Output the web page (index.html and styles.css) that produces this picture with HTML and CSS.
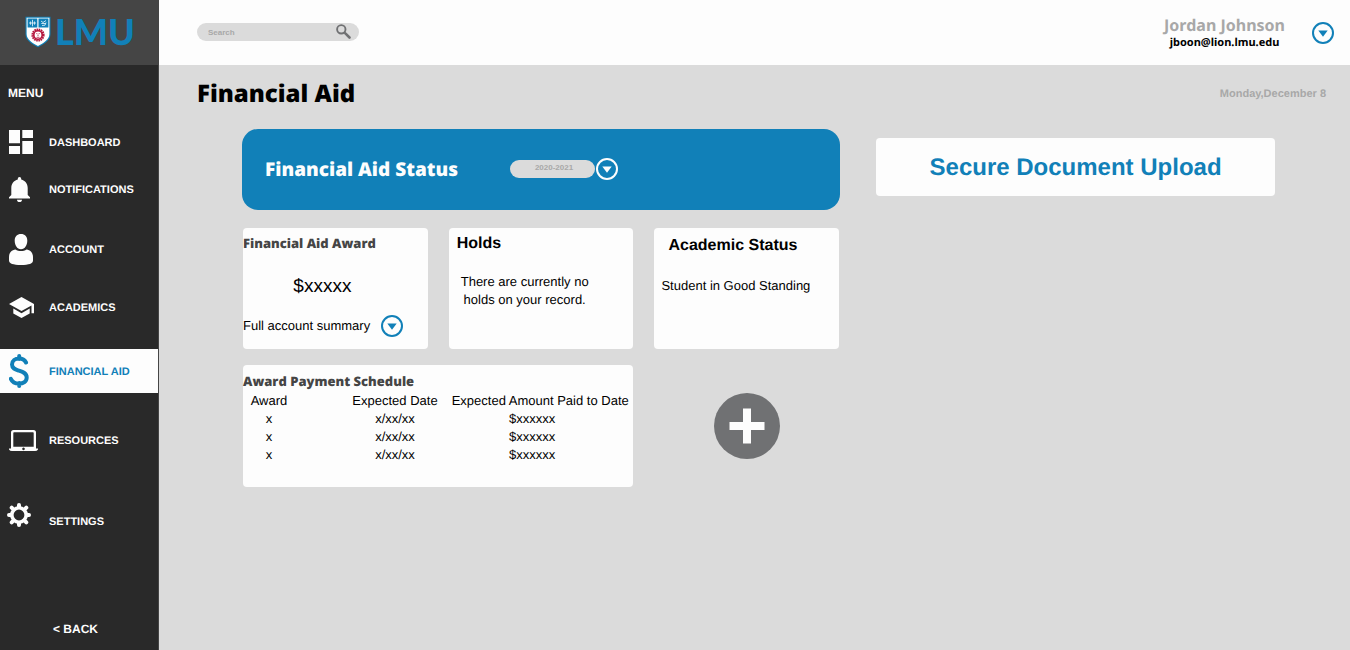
FILE: index.html
```html
<!DOCTYPE html>
<html lang="en">
<head>
<meta charset="utf-8">
<meta name="viewport" content="width=device-width, initial-scale=1">
<title>Financial Aid</title>
<link rel="stylesheet" href="styles.css">
</head>
<body class="app">
<aside class="sidebar">
  <a class="logo" href="#" aria-label="LMU home">
    <svg class="logo-shield" viewBox="0 0 26 32" aria-hidden="true">
      <path d="M0.5 0.8H25.5V18C25.5 25 18 28.500 13 31.200C8 28.500 0.500 25 0.500 18Z" fill="#1180b8"/>
      <path d="M1.600 1.800H24.400V18C24.400 24 17.500 27.500 13 30C8.500 27.500 1.600 24 1.600 18Z" fill="#fff"/>
      <path d="M2.600 2.600H12.300V11.500H2.600ZM13.500 2.600H23.400V11.500H13.500Z" fill="#1180b8"/>
      <path d="M4 7H11M7.500 3.800V10.300M5.500 5.500V8.700M9.500 5.500V8.700M16 5L18 6.500L21 4.500M16.300 7.500H21M17 9.500L20 9.200L21 6.500" fill="none" stroke="#d8ecf6" stroke-width="0.900"/>
      <circle cx="13" cy="19" r="5.300" fill="none" stroke="#b5173e" stroke-width="2.600" stroke-dasharray="1.500 0.580"/>
      <circle cx="13" cy="19" r="4.200" fill="none" stroke="#b5173e" stroke-width="1.600"/>
      <path d="M11.300 17.600H12.300M13.700 17.600H14.700M13 18.500V20M11.500 21.300H14.500" stroke="#b5173e" stroke-width="0.800"/>
    </svg>
    <span class="logo-word">LMU</span>
  </a>
  <h2 class="menu-title">MENU</h2>
  <nav class="nav">
    <a class="nav-item" href="#">
      <svg class="nav-icon" viewBox="0 0 24 24"><path d="M0 0H11V13.300H0ZM13.300 0H24V8H13.300ZM0 16H11V24H0ZM13.300 11H24V24H13.300Z"/></svg>
      <span class="nav-text">DASHBOARD</span>
    </a>
    <a class="nav-item" href="#">
      <svg class="nav-icon nav-icon-bell" viewBox="0 0 21 25"><path d="M10.500 0C11.600 0 12.200 0.800 12.200 1.900V2.600C16.200 3.600 18.700 7 18.700 11V18L21 20.300V21.500H0V20.300L2.300 18V11C2.300 7 4.800 3.600 8.800 2.600V1.900C8.800 0.800 9.400 0 10.500 0ZM8 22.700H13C13 24.200 12 25 10.500 25S8 24.200 8 22.700Z"/></svg>
      <span class="nav-text">NOTIFICATIONS</span>
    </a>
    <a class="nav-item gap-medium" href="#">
      <svg class="nav-icon nav-icon-tall" viewBox="0 0 24 31"><path d="M12 0C15.800 0 18.300 2.500 18.300 6.500C18.300 11 16 15.200 12 15.200S5.700 11 5.700 6.500C5.700 2.500 8.200 0 12 0ZM6.500 15.500C9.500 17.500 14.500 17.500 17.500 15.500C21.500 16 24 19 24 23V26.500C24 29.500 20 31 12 31S0 29.500 0 26.500V23C0 19 2.500 16 6.500 15.500Z"/></svg>
      <span class="nav-text">ACCOUNT</span>
    </a>
    <a class="nav-item gap-small" href="#">
      <svg class="nav-icon nav-icon-cap" viewBox="0 0 25 21"><path d="M12.500 0L25 7V16.300H22.500V8.400L12.500 14L0 7ZM4.300 11.500L12.500 16.200L20.700 11.500V16.500L12.500 21L4.300 16.500Z"/></svg>
      <span class="nav-text">ACADEMICS</span>
    </a>
    <a class="nav-item nav-item-active gap-large" href="#" aria-current="page">
      <svg class="nav-icon nav-icon-dollar" viewBox="0 0 20 34"><path d="M17 8.500C15.500 5.500 12.800 4.500 10 4.500C6.300 4.500 3 6.700 3 10.500C3 14.500 6.500 15.500 10 16.700C14 18 17.700 19.200 17.700 23.500C17.700 27.500 14.200 29.600 10 29.600C6.500 29.600 3.200 28 1.800 24.800M10.200 2V5M10.200 29V32" fill="none" stroke="#1180b8" stroke-width="4" stroke-linecap="round"/></svg>
      <span class="nav-text">FINANCIAL AID</span>
    </a>
    <a class="nav-item gap-xlarge" href="#">
      <svg class="nav-icon nav-icon-laptop" viewBox="0 0 29 21"><path fill-rule="evenodd" d="M4.500 0H24.500Q27 0 27 2.500V18.500H29V19.500Q28 21 26 21H3Q1 21 0 19.500V18.500H2V2.500Q2 0 4.500 0ZM5 2.300Q4.300 2.300 4.300 3V16.700H24.700V3Q24.700 2.300 24 2.300ZM14.500 17.600A1.300 1.300 0 1 0 14.510 17.600Z"/></svg>
      <span class="nav-text">RESOURCES</span>
    </a>
    <a class="nav-item nav-item-settings gap-huge" href="#">
      <svg class="nav-icon" viewBox="0 0 24 24"><circle cx="12" cy="12" r="7.200" fill="none" stroke="#fdfdfd" stroke-width="3.600"/><path d="M12 4V2M12 20V22M4 12H2M20 12H22M5.600 5.600L4.700 4.700M18.400 18.400L19.300 19.300M5.600 18.400L4.700 19.300M18.400 5.600L19.300 4.700" stroke="#fdfdfd" stroke-width="4" stroke-linecap="round"/></svg>
      <span class="nav-text">SETTINGS</span>
    </a>
  </nav>
  <a class="back" href="#">&lt; BACK</a>
</aside>

<div class="page">
  <header class="topbar">
    <form class="search" role="search">
      <input class="search-input" type="search" placeholder="Search" aria-label="Search">
      <button class="search-button" type="button" aria-label="Submit search">
        <svg class="search-icon" viewBox="0 0 15 15"><circle cx="5.300" cy="5.300" r="4.200" fill="none" stroke="#707173" stroke-width="1.900"/><path d="M8.300 8.300L9.500 9.500" stroke="#707173" stroke-width="1.800"/><path d="M9.600 9.600L13.500 13.500" stroke="#707173" stroke-width="2.600" stroke-linecap="round"/></svg>
      </button>
    </form>
    <div class="user">
      <div class="user-text">
        <span class="user-name">Jordan Johnson</span>
        <span class="user-mail">jboon@lion.lmu.edu</span>
      </div>
      <button class="round-button" type="button" aria-label="Open account menu">
        <svg viewBox="0 0 22 22"><circle cx="11" cy="11" r="10"/><path d="M6.300 8.500H15.700L11 14.800Z"/></svg>
      </button>
    </div>
  </header>

  <main class="main">
    <div class="title-row">
      <h1 class="page-title">Financial Aid</h1>
      <time class="date">Monday,December 8</time>
    </div>
    <div class="content">
      <div class="primary">
        <section class="banner">
          <h2 class="banner-title">Financial Aid Status</h2>
          <div class="year">
            <select class="year-select" aria-label="Academic year">
              <option>2020-2021</option>
            </select>
            <button class="round-button round-button-light" type="button" aria-label="Choose year">
              <svg viewBox="0 0 22 22"><circle cx="11" cy="11" r="10"/><path d="M6.300 8.500H15.700L11 14.800Z"/></svg>
            </button>
          </div>
        </section>
        <div class="cards">
          <section class="card">
            <h3 class="card-label">Financial Aid Award</h3>
            <p class="amount">$xxxxx</p>
            <div class="summary">
              <span>Full account summary</span>
              <button class="round-button" type="button" aria-label="Show full account summary">
                <svg viewBox="0 0 22 22"><circle cx="11" cy="11" r="10"/><path d="M6.300 8.500H15.700L11 14.800Z"/></svg>
              </button>
            </div>
          </section>
          <section class="card card-holds">
            <h3 class="card-title">Holds</h3>
            <p class="holds-text">There are currently no<br>holds on your record.</p>
          </section>
          <section class="card card-status">
            <h3 class="card-title">Academic Status</h3>
            <p class="status-text">Student in Good Standing</p>
          </section>
          <section class="card card-wide">
            <h3 class="card-label">Award Payment Schedule</h3>
            <table class="schedule">
              <thead>
                <tr><th class="col-award" scope="col">Award</th><th class="col-date" scope="col">Expected Date</th><th scope="col">Expected Amount Paid to Date</th></tr>
              </thead>
              <tbody>
                <tr><td class="col-award">x</td><td class="col-date">x/xx/xx</td><td class="col-amount">$xxxxxx</td></tr>
                <tr><td class="col-award">x</td><td class="col-date">x/xx/xx</td><td class="col-amount">$xxxxxx</td></tr>
                <tr><td class="col-award">x</td><td class="col-date">x/xx/xx</td><td class="col-amount">$xxxxxx</td></tr>
              </tbody>
            </table>
          </section>
          <button class="add-button" type="button" aria-label="Add card">
            <svg viewBox="0 0 66 66"><circle cx="33" cy="33" r="33" fill="#707173"/><path d="M29 15.500H37V29H50.500V37H37V50.500H29V37H15.500V29H29Z" fill="#fdfdfd"/></svg>
          </button>
        </div>
      </div>
      <a class="upload" href="#">Secure Document Upload</a>
    </div>
  </main>
</div>
</body>
</html>
```
FILE: styles.css
```css
* {
  box-sizing: border-box;
}

h1, h2, h3, p {
  margin: 0;
}

a {
  color: inherit;
  text-decoration: none;
}

button {
  padding: 0;
  border: 0;
  background: none;
  cursor: pointer;
}

svg {
  display: block;
}

.app {
  display: flex;
  min-height: 100vh;
  margin: 0;
  background: #dbdbdb;
  color: #000;
  font-family: "Liberation Sans", Arial, sans-serif;
  font-size: 13px;
  line-height: 18px;
  text-rendering: geometricPrecision;
}

/* Sidebar */
.sidebar {
  display: flex;
  flex: 0 0 159px;
  flex-direction: column;
  border-right: 1px solid #454545;
  background: #292929;
  color: #fdfdfd;
}

.logo {
  display: flex;
  align-items: center;
  height: 65px;
  padding: 0 0 2px 25px;
  gap: 4px;
  background: #454545;
}

.logo-shield {
  width: 26px;
  height: 32px;
}

.logo-word {
  padding-bottom: 2px;
  color: #1180b8;
  font: 900 36px/36px Lato, sans-serif;
}

.menu-title {
  padding: 19px 8px 0;
  font-size: 12px;
  line-height: 18px;
}

.nav {
  display: flex;
  flex-direction: column;
  padding-top: 18px;
}

.nav-item {
  display: grid;
  grid-template-columns: 40px 1fr;
  align-items: center;
  height: 44px;
  margin-top: 3px;
  padding-left: 9px;
  font-size: 11px;
  font-weight: 700;
}

.nav-item:first-child {
  margin-top: 0;
}

.nav-item-active {
  background: #fdfdfd;
  color: #1180b8;
}

.nav-text {
  padding-top: 2px;
}

.nav-item.gap-small {
  margin-top: 14px;
}

.nav-item.gap-medium {
  margin-top: 16px;
}

.nav-item.gap-large {
  margin-top: 20px;
}

.nav-item.gap-xlarge {
  margin-top: 25px;
}

.nav-item.gap-huge {
  margin-top: 37px;
}

.nav-icon {
  width: 24px;
  height: 24px;
  fill: #fdfdfd;
}

.nav-icon-bell {
  width: 21px;
  height: 25px;
}

.nav-icon-tall {
  height: 31px;
}

.nav-icon-cap {
  width: 25px;
  height: 21px;
}

.nav-icon-dollar {
  width: 20px;
  height: 34px;
}

.nav-icon-laptop {
  width: 29px;
  height: 21px;
}

.nav-item-settings {
  grid-template-columns: 42px 1fr;
  padding-left: 7px;
}

.nav-item-settings .nav-icon {
  align-self: start;
  margin-top: 4px;
}

.back {
  margin-top: auto;
  padding: 0 53px 12px;
  font-size: 12px;
  font-weight: 700;
  white-space: nowrap;
}

/* Top bar */
.page {
  flex: 1;
  min-width: 0;
}

.topbar {
  display: flex;
  align-items: center;
  justify-content: space-between;
  height: 65px;
  padding: 0 16px 0 38px;
  background: #fdfdfd;
}

.search {
  display: flex;
  align-items: center;
  width: 162px;
  height: 18px;
  margin-bottom: 2px;
  padding: 0 8px 0 11px;
  border-radius: 9px;
  background: #dbdbdb;
}

.search-input {
  flex: 1;
  min-width: 0;
  padding: 2px 0 0;
  border: 0;
  background: none;
  font: 700 8px/16px "Liberation Sans", Arial, sans-serif;
}

.search-input::placeholder {
  color: #a8a8a8;
}

.search-icon {
  width: 15px;
  height: 15px;
}

.user {
  display: flex;
  align-items: center;
  gap: 27px;
}

.user-text {
  display: flex;
  flex-direction: column;
  align-items: center;
  padding-top: 3px;
  font-family: "Noto Sans", sans-serif;
  font-weight: 700;
}

.user-name {
  color: #a8a8a8;
  font-size: 16px;
}

.user-mail {
  font-size: 11px;
}

.round-button {
  width: 22px;
  height: 22px;
  color: #1180b8;
}

.round-button circle {
  fill: none;
  stroke: currentColor;
  stroke-width: 2;
}

.round-button path {
  fill: currentColor;
}

.round-button-light {
  color: #fdfdfd;
}

/* Page body */
.title-row {
  display: flex;
  align-items: center;
  justify-content: space-between;
  padding: 11px 24px 0 38px;
}

.page-title {
  font: 800 24px/36px "Open Sans", sans-serif;
}

.date {
  color: #a8a8a8;
  font-size: 11px;
  font-weight: 700;
}

.content {
  display: grid;
  grid-template-columns: 3fr 2fr;
  align-items: start;
  gap: 36px;
  padding: 17px 75px 24px 83px;
}

.banner {
  display: flex;
  align-items: center;
  min-height: 81px;
  padding: 0 23px 2px;
  border-radius: 16px;
  background: #1180b8;
  gap: 52px;
}

.banner-title {
  color: #fdfdfd;
  font: 800 19px/28px "Open Sans", sans-serif;
}

.year {
  display: flex;
  align-items: center;
  gap: 1px;
}

.year-select {
  width: 85px;
  height: 18px;
  padding: 0 0 1px 3px;
  border: 0;
  border-radius: 9px;
  background: #dbdbdb;
  color: #a8a8a8;
  font: 700 8px/16px "Liberation Sans", Arial, sans-serif;
  text-align: center;
  text-align-last: center;
  appearance: none;
}

.cards {
  display: grid;
  grid-template-columns: repeat(3, 1fr);
  gap: 16px 21px;
  padding: 18px 1px 0;
}

.card {
  min-height: 121px;
  padding-top: 6px;
  border-radius: 4px;
  background: #fdfdfd;
}

.card-label {
  color: #454545;
  font: 800 13px/18px "Open Sans", sans-serif;
}

.card-title {
  font-size: 16px;
  line-height: 18px;
}

.amount {
  margin-top: 23px;
  padding-right: 26px;
  font-size: 19px;
  line-height: 24px;
  text-align: center;
}

.summary {
  display: flex;
  align-items: center;
  margin-top: 16px;
  gap: 11px;
}

.card-holds {
  padding-top: 7px;
  padding-left: 8px;
}

.holds-text {
  width: fit-content;
  margin-top: 20px;
  padding-left: 4px;
  text-align: center;
}

.card-status {
  padding-top: 9px;
  padding-left: 7px;
}

.card-status .card-title {
  padding-left: 7px;
}

.status-text {
  margin-top: 22px;
}

.card-wide {
  grid-column: span 2;
  min-height: 122px;
  padding-top: 7px;
}

.schedule {
  width: 100%;
  margin-top: 2px;
  border-collapse: collapse;
}

.schedule th,
.schedule td {
  padding: 0;
  font-weight: 400;
  text-align: center;
  white-space: nowrap;
}

.schedule .col-award {
  width: 100px;
  padding-right: 48px;
}

.schedule .col-date {
  width: 104px;
}

.schedule .col-amount {
  padding-right: 16px;
}

.add-button {
  place-self: center;
  width: 66px;
  height: 66px;
  border-radius: 50%;
}

.upload {
  margin-top: 9px;
  padding: 15px 14px 13px;
  border-radius: 4px;
  background: #fdfdfd;
  color: #1180b8;
  font-size: 24px;
  font-weight: 700;
  line-height: 30px;
  text-align: center;
}
```
